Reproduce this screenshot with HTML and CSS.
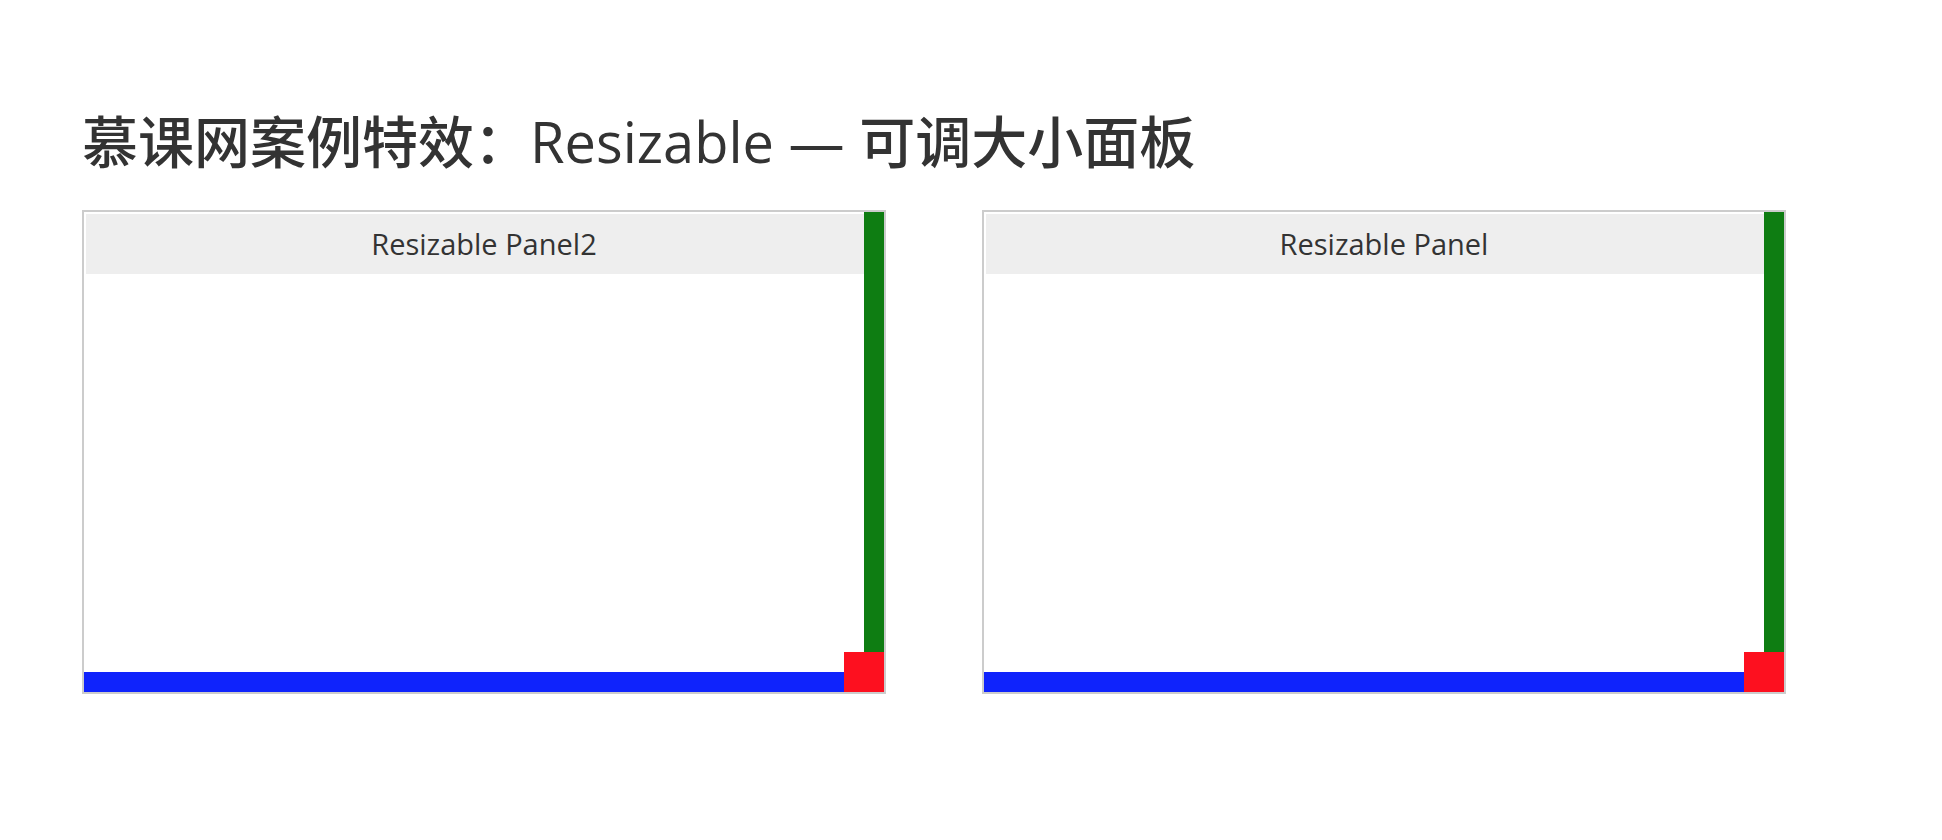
FILE: index.html
```html
<!DOCTYPE html>
<html lang="zh-CN">
<head>
<meta charset="utf-8">
<title>Resizable</title>
<link rel="stylesheet" href="styles.css">
</head>
<body>
<div class="page">
  <h1 class="title"><span class="cjk">慕课网案例特效：</span>Resizable — <span class="cjk">可调大小面板</span></h1>
  <div class="panels">
    <div class="panel">
      <div class="panel-header">Resizable Panel2</div>
      <div class="handle handle-e"></div>
      <div class="handle handle-s"></div>
      <div class="handle handle-se"></div>
    </div>
    <div class="panel">
      <div class="panel-header">Resizable Panel</div>
      <div class="handle handle-e"></div>
      <div class="handle handle-s"></div>
      <div class="handle handle-se"></div>
    </div>
  </div>
</div>
</body>
</html>
```

FILE: styles.css
```css
html, body {
  margin: 0;
  padding: 0;
  background: #ffffff;
}

.page {
  padding: 108px 0 0 82px;
  font-family: "Open Sans", "Noto Sans CJK SC", sans-serif;
  color: #333333;
}

.title {
  margin: 0;
  font-size: 56px;
  line-height: 67px;
  font-weight: 400;
  color: #333333;
}

.cjk {
  font-weight: 500;
}

.panels {
  display: flex;
  gap: 96px;
  margin-top: 35px;
}

.panel {
  position: relative;
  box-sizing: border-box;
  width: 804px;
  height: 484px;
  border: 2px solid #cccccc;
  padding: 2px;
  background: #ffffff;
}

.panel-header {
  height: 60px;
  line-height: 60px;
  background: #eeeeee;
  text-align: center;
  font-size: 29px;
  font-weight: 400;
  color: #333333;
}

.handle {
  position: absolute;
}

.handle-e {
  top: 0;
  right: 0;
  width: 20px;
  bottom: 40px;
  background: #0e7d12;
}

.handle-s {
  left: 0;
  bottom: 0;
  height: 20px;
  right: 40px;
  background: #0f23fc;
}

.handle-se {
  right: 0;
  bottom: 0;
  width: 40px;
  height: 40px;
  background: #fd101f;
}
```
